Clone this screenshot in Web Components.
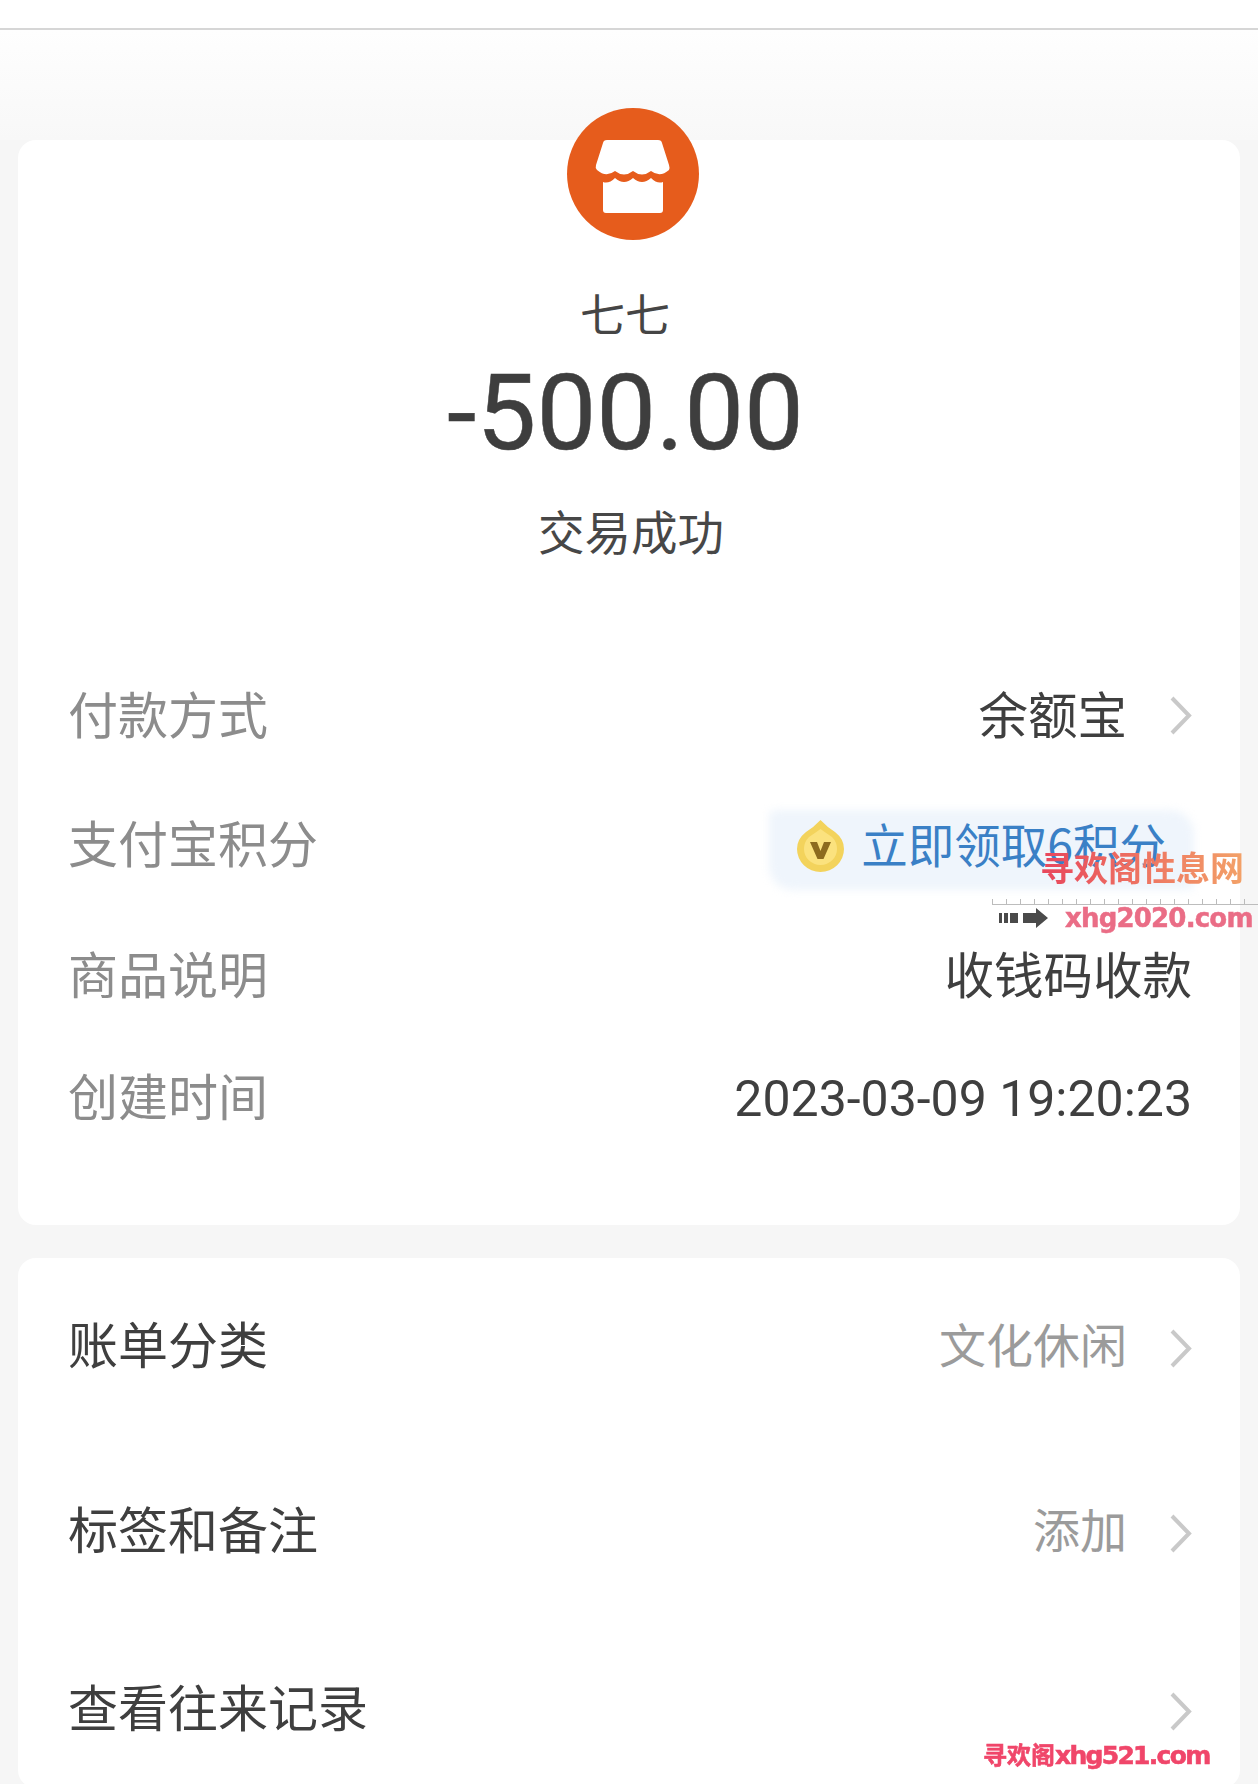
<!DOCTYPE html>
<html lang="zh">
<head>
<meta charset="utf-8">
<title>账单详情</title>
<style>
  html, body { margin: 0; padding: 0; background: #f6f6f6; }
  body { font-family: "Noto Sans CJK SC", "Noto Sans", sans-serif; }
</style>
</head>
<body>
<receipt-page>
  <receipt-card style="height:1085px">
    <receipt-head name="七七" amount="-500.00" status="交易成功"></receipt-head>
    <info-row label="付款方式" chevron style="height:128px">余额宝</info-row>
    <info-row label="支付宝积分" style="height:130px"><points-pill>立即领取6积分</points-pill></info-row>
    <info-row label="商品说明" style="height:132px">收钱码收款</info-row>
    <info-row label="创建时间" style="height:112px"><span style="display:block;margin-top:10px;font-family:Roboto,sans-serif;font-size:50px">2023-03-09 19:20:23</span></info-row>
  </receipt-card>
  <receipt-card style="height:530px;margin-top:33px">
    <info-row label="账单分类" strong muted chevron style="height:174px">文化休闲</info-row>
    <info-row label="标签和备注" strong muted chevron style="height:196px">添加</info-row>
    <info-row label="查看往来记录" strong chevron style="height:160px"></info-row>
  </receipt-card>
  <site-marks></site-marks>
</receipt-page>

<template id="page-tpl">
  <style>
    :host { display: block; position: relative; height: 1784px; overflow: hidden; color: #3f3f3f; }
    .top { height: 28px; background: #fff; border-bottom: 2px solid #d6d6d6; }
    .wash { height: 110px; background: linear-gradient(#fefefe, #f8f8f8); }
    .cards { padding: 0 18px; }
  </style>
  <div class="top"></div>
  <div class="wash"></div>
  <div class="cards"><slot></slot></div>
</template>

<template id="card-tpl">
  <style>
    :host { display: flex; flex-direction: column; background: #fff; border-radius: 18px; padding: 0 48px 0 50px; filter: blur(.5px); }
  </style>
  <slot></slot>
</template>

<template id="head-tpl">
  <style>
    :host { display: flex; flex-direction: column; align-items: center; height: 511px; }
    svg { display: block; width: 132px; height: 132px; margin-top: -32px; margin-left: 6px; }
    .name { margin-top: 43px; height: 60px; line-height: 60px; font-size: 45px; margin-right: 10px; color: #454545; }
    .amount { margin-top: 2px; height: 136px; line-height: 136px; font-family: Roboto, sans-serif; font-size: 106.500px; -webkit-text-stroke: .5px #3e3e3e; margin-right: 9px; color: #3e3e3e; }
    .status { margin-top: 17px; height: 64px; line-height: 64px; font-size: 46.500px; margin-left: 2px; color: #474747; }
  </style>
  <svg viewBox="0 0 132 132" aria-hidden="true">
    <circle cx="66" cy="66" r="66" fill="#e65c1c"/>
    <path fill="#fff" d="M36 35 Q36.500 32 40 32 H91 Q94.500 32 95 35 L102 57 Q103 60 102 62 Q93 70 84 63 Q75 70 66 63 Q57 70 48 63 Q39 70 30 62 Q28 60 29 57 Z"/>
    <path fill="#fff" d="M36 74 Q42 76 48 70 Q57 78 66 70 Q75 78 84 70 Q90 76 96 74 V102 Q96 105 93 105 H39 Q36 105 36 102 Z"/>
  </svg>
  <div class="name"></div>
  <div class="amount"></div>
  <div class="status"></div>
</template>

<template id="row-tpl">
  <style>
    :host { display: flex; align-items: center; justify-content: space-between; font-size: 50px; flex: none; }
    .label { color: #8c8c8c; white-space: nowrap; margin-bottom: 7px; }
    :host([strong]) .label { color: #3f3f3f; }
    .value { display: flex; align-items: center; color: #3f3f3f; white-space: nowrap; font-size: 49.500px; }
    .txt { margin-bottom: 6px; }
    :host([muted]) .value { color: #9b9b9b; font-size: 47px; }
    svg { display: none; width: 23px; height: 41px; margin-left: 42px; }
    :host([chevron]) svg { display: block; }
    :host([strong]) svg { margin-top: 6px; }
  </style>
  <span class="label"></span>
  <span class="value">
    <span class="txt"><slot></slot></span>
    <svg viewBox="0 0 23 41" fill="none" stroke="#c9c9c9" stroke-width="4" aria-hidden="true"><path d="M3 3 L20 20.500 L3 38"/></svg>
  </span>
</template>

<template id="pill-tpl">
  <style>
    :host { display: flex; align-items: center; position: relative; height: 80px; margin: 3px -2px 0 0; padding: 0 28px 0 30px; color: #3a80c6; font-size: 46.500px; }
    .bg { position: absolute; inset: 7px 0 -7px 2px; background: #eff5fc; border-radius: 6px 24px 6px 24px; filter: blur(4px); }
    svg, .t { position: relative; }
    svg { width: 47px; height: 52px; margin: 6px 17px 0 0; flex: none; }
  </style>
  <div class="bg"></div>
  <svg viewBox="0 0 47 52" aria-hidden="true">
    <path fill="#f3d35c" d="M23.500 0 Q30 7 38 12 Q47 19 47 29 A23.500 23 0 0 1 0 29 Q0 19 9 12 Q17 7 23.500 0 Z"/>
    <path fill="#fbe27e" d="M23.500 9 Q29 13 35 17 Q40 22 40 29 A16.500 16 0 0 1 7 29 Q7 22 12 17 Q18 13 23.500 9 Z"/>
    <path fill="#8d6b1e" d="M13 22 H20 L23.500 31 L27 22 H34 L26.500 39 H20.500 Z"/>
  </svg>
  <span class="t"><slot></slot></span>
</template>

<template id="marks-tpl">
  <style>
    :host { position: absolute; inset: 0; pointer-events: none; }
    .cn { position: absolute; left: 1040px; top: 845px; font-size: 34px; line-height: 44px; font-weight: 700; white-space: nowrap; background: linear-gradient(90deg, #e8465c, #f3a268); -webkit-background-clip: text; background-clip: text; color: transparent; }
    .ruler { position: absolute; left: 992px; top: 899px; width: 266px; height: 5px; border-bottom: 1px solid #bdbdbd; background: repeating-linear-gradient(90deg, #bbb 0 1px, transparent 1px 14px); }
    svg { position: absolute; left: 999px; top: 908px; width: 50px; height: 20px; }
    .site { position: absolute; left: 1065px; top: 902px; font: 700 26px/32px "DejaVu Sans", sans-serif; -webkit-text-stroke: .5px #ea6d86; color: #ea6d86; white-space: nowrap; letter-spacing: -.8px; }
    .foot { position: absolute; left: 983px; top: 1737px; font-size: 24px; line-height: 34px; font-weight: 700; -webkit-text-stroke: .6px #f0466a; color: #f0466a; white-space: nowrap; }
    .foot b { font: 700 25px/34px "DejaVu Sans", sans-serif; letter-spacing: -1.700px; }
  </style>
  <div class="cn">寻欢阁性息网</div>
  <div class="ruler"></div>
  <svg viewBox="0 0 50 20" fill="#4a4a4a" aria-hidden="true"><path d="M0 5h3v10H0zM5 5h4v10H5zM11 5h8v10h-8zM24 5h13V0l12 10-12 10v-5H24z"/></svg>
  <div class="site">xhg2020.com</div>
  <div class="foot">寻欢阁<b>xhg521.com</b></div>
</template>

<script>
  // each element just clones its template into an open shadow root
  function shadow(el, id) {
    const root = el.attachShadow({ mode: "open" });
    root.appendChild(document.getElementById(id).content.cloneNode(true));
    return root;
  }

  class ReceiptPage extends HTMLElement {
    constructor() { super(); shadow(this, "page-tpl"); }
  }

  class ReceiptCard extends HTMLElement {
    constructor() { super(); shadow(this, "card-tpl"); }
  }

  class ReceiptHead extends HTMLElement {
    constructor() { super(); shadow(this, "head-tpl"); }
    connectedCallback() {
      const root = this.shadowRoot;
      root.querySelector(".name").textContent = this.getAttribute("name");
      root.querySelector(".amount").textContent = this.getAttribute("amount");
      root.querySelector(".status").textContent = this.getAttribute("status");
    }
  }

  class InfoRow extends HTMLElement {
    constructor() { super(); shadow(this, "row-tpl"); }
    connectedCallback() {
      this.shadowRoot.querySelector(".label").textContent = this.getAttribute("label");
    }
  }

  class PointsPill extends HTMLElement {
    constructor() { super(); shadow(this, "pill-tpl"); }
  }

  class SiteMarks extends HTMLElement {
    constructor() { super(); shadow(this, "marks-tpl"); }
  }

  customElements.define("receipt-page", ReceiptPage);
  customElements.define("receipt-card", ReceiptCard);
  customElements.define("receipt-head", ReceiptHead);
  customElements.define("info-row", InfoRow);
  customElements.define("points-pill", PointsPill);
  customElements.define("site-marks", SiteMarks);
</script>
</body>
</html>
